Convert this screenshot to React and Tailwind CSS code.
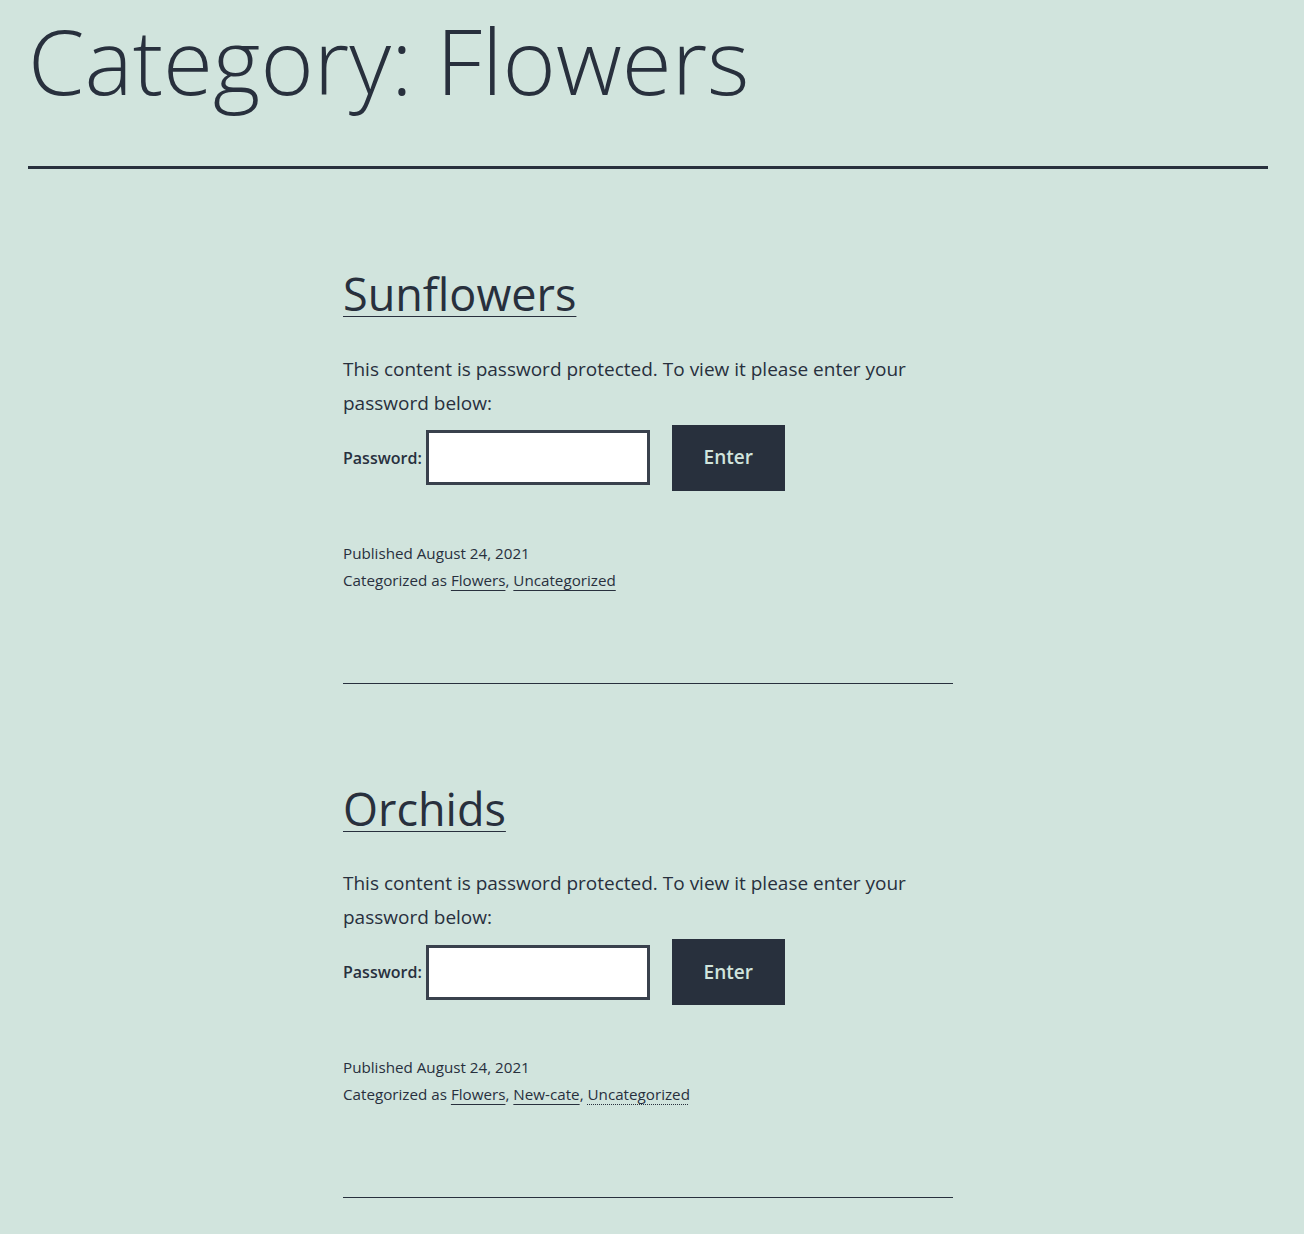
import React from 'react';

const posts = [
  { title: 'Sunflowers', cats: ['Flowers', 'Uncategorized'] },
  { title: 'Orchids', cats: ['Flowers', 'New-cate', 'Uncategorized'] },
];

const Post = ({ post }) => (
  <article className="pt-[96px]">
    <h2 className="text-[45px] leading-[1.3]">
      <a href="#" className="underline decoration-1 underline-offset-[5px]">
        {post.title}
      </a>
    </h2>
    <p className="mt-[28px] text-[19px] leading-[34px]">
      This content is password protected. To view it please enter your password below:
    </p>
    <form className="mt-[5px] flex items-center" onSubmit={(e) => e.preventDefault()}>
      <label className="flex items-center text-[16px] font-semibold">
        Password:
        <input
          type="password"
          className="ml-[4px] h-[55px] w-[224px] border-[3px] border-[#39414d] bg-white outline-none"
        />
      </label>
      <button className="ml-[22px] h-[66px] w-[113px] bg-[#28303d] text-[19px] font-semibold text-[#d1e4dd]">
        Enter
      </button>
    </form>
    <footer className="mt-[49px] text-[15.2px] leading-[27px]">
      <div>Published August 24, 2021</div>
      <div>
        Categorized as{' '}
        {post.cats.map((c, i) => (
          <span key={c}>
            <a
              href="#"
              className={`underline decoration-1 underline-offset-[4px] ${
                i === post.cats.length - 1 && post.cats.length > 2 ? 'decoration-dotted' : ''
              }`}
            >
              {c}
            </a>
            {i < post.cats.length - 1 ? ', ' : ''}
          </span>
        ))}
      </div>
    </footer>
    <div className="mt-[89px] border-t border-[#28303d]" />
  </article>
);

export default function App() {
  return (
    <div
      className="min-h-screen bg-[#d1e4dd] text-[#28303d]"
      style={{ fontFamily: '"Open Sans", "Noto Sans", sans-serif' }}
    >
      <div className="w-[1296px] px-[28px] pb-[40px]">
        <header>
          <h1 className="text-[91px] font-light leading-[120px]">Category: Flowers</h1>
        </header>
        <div className="mt-[46px] border-t-[3px] border-[#28303d]" />
        <main className="mx-auto w-[610px]">
          {posts.map((p) => (
            <Post key={p.title} post={p} />
          ))}
        </main>
      </div>
    </div>
  );
}
